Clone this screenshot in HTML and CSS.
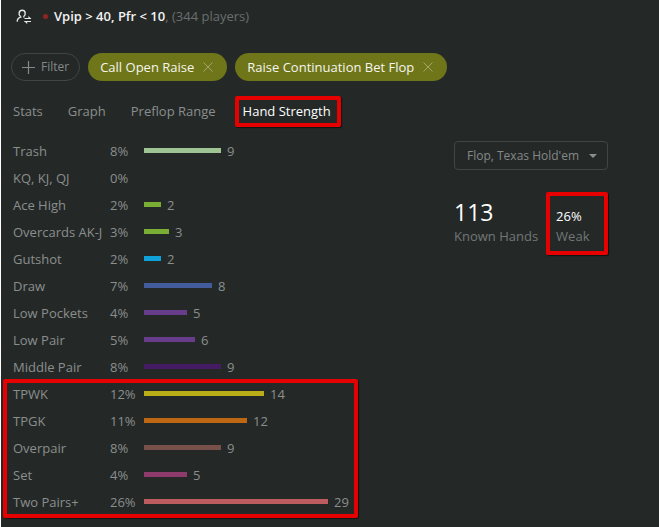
FILE: index.html
```html
<!DOCTYPE html>
<html lang="en">
<head>
<meta charset="utf-8">
<title>Hand Strength</title>
<meta name="viewport" content="width=device-width, initial-scale=1">
<link rel="stylesheet" href="styles.css">
</head>
<body>
<header class="title">
  <svg class="player-icon" width="16" height="16" viewBox="0 0 16 16" fill="none" stroke="currentColor">
    <path d="M4.5 8.3C2.2 7 2.6 2.2 6.2 2.2S10 7 7.8 8.3M4.7 8.2v1C2.6 9.8 1.3 11 1.2 13.6M7.8 8.2v1.2" stroke-width="1.4"/>
    <path d="M8.5 10.5h6.5M8.5 13.5h6.5" stroke-width="1.2"/>
    <path d="M12.4 8v3h3.1zM11.2 16v-3H8z" fill="currentColor" stroke="none"/>
  </svg>
  <span class="dot"></span>
  <h1 class="query">Vpip &gt; 40, Pfr &lt; 10</h1><span class="count">, (344 players)</span>
</header>
<div class="filters">
  <button class="pill add" type="button"><svg width="13" height="13" viewBox="0 0 13 13" stroke="currentColor" stroke-width="1.2"><path d="M6.5 0v13M0 6.5h13"/></svg>Filter</button>
  <button class="pill" type="button">Call Open Raise<svg class="close" width="10" height="10" viewBox="0 0 10 10" stroke="currentColor"><path d="M.5 .5l9 9M9.5 .5l-9 9"/></svg></button>
  <button class="pill" type="button">Raise Continuation Bet Flop<svg class="close" width="10" height="10" viewBox="0 0 10 10" stroke="currentColor"><path d="M.5 .5l9 9M9.5 .5l-9 9"/></svg></button>
</div>
<nav class="tabs">
  <a href="#stats">Stats</a>
  <a href="#graph">Graph</a>
  <a href="#range">Preflop Range</a>
  <a class="active marked" href="#strength" aria-current="page">Hand Strength</a>
</nav>
<main class="content">
  <table class="hands">
    <tbody>
      <tr><th scope="row">Trash</th><td>8%</td><td><div class="meter"><span class="bar trash" style="width:77px"></span>9</div></td></tr>
      <tr><th scope="row">KQ, KJ, QJ</th><td>0%</td><td></td></tr>
      <tr><th scope="row">Ace High</th><td>2%</td><td><div class="meter"><span class="bar high" style="width:17px"></span>2</div></td></tr>
      <tr><th scope="row">Overcards AK-J</th><td>3%</td><td><div class="meter"><span class="bar high" style="width:25px"></span>3</div></td></tr>
      <tr><th scope="row">Gutshot</th><td>2%</td><td><div class="meter"><span class="bar gutshot" style="width:17px"></span>2</div></td></tr>
      <tr><th scope="row">Draw</th><td>7%</td><td><div class="meter"><span class="bar draw" style="width:68px"></span>8</div></td></tr>
      <tr><th scope="row">Low Pockets</th><td>4%</td><td><div class="meter"><span class="bar low" style="width:43px"></span>5</div></td></tr>
      <tr><th scope="row">Low Pair</th><td>5%</td><td><div class="meter"><span class="bar low" style="width:51px"></span>6</div></td></tr>
      <tr><th scope="row">Middle Pair</th><td>8%</td><td><div class="meter"><span class="bar middle" style="width:77px"></span>9</div></td></tr>
    </tbody>
    <tbody class="marked">
      <tr><th scope="row">TPWK</th><td>12%</td><td><div class="meter"><span class="bar tpwk" style="width:120px"></span>14</div></td></tr>
      <tr><th scope="row">TPGK</th><td>11%</td><td><div class="meter"><span class="bar tpgk" style="width:103px"></span>12</div></td></tr>
      <tr><th scope="row">Overpair</th><td>8%</td><td><div class="meter"><span class="bar overpair" style="width:77px"></span>9</div></td></tr>
      <tr><th scope="row">Set</th><td>4%</td><td><div class="meter"><span class="bar set" style="width:43px"></span>5</div></td></tr>
      <tr><th scope="row">Two Pairs+</th><td>26%</td><td><div class="meter"><span class="bar two-pairs" style="width:184px"></span>29</div></td></tr>
    </tbody>
  </table>
  <section class="summary">
    <div class="picker">
      <select aria-label="Street and game">
        <option>Flop, Texas Hold'em</option>
      </select>
      <svg class="caret" width="8" height="4" viewBox="0 0 8 4" fill="currentColor"><path d="M0 0h8L4 4z"/></svg>
    </div>
    <div class="totals">
      <div class="total"><strong class="large">113</strong><span>Known Hands</span></div>
      <div class="total marked"><strong>26%</strong><span>Weak</span></div>
    </div>
  </section>
</main>
</body>
</html>
```
FILE: styles.css
```css
* { box-sizing: border-box; }

html { background: #242928; }

body {
  margin: 0;
  min-height: 100vh;
  border-left: 1px solid #fff;
  background: #242928;
  color: #8b8e8d;
  font: 13px/20px "Segoe UI", "Open Sans", "Noto Sans", sans-serif;
}

.title {
  display: flex;
  align-items: center;
  padding: 6px 15px 0;
}

.player-icon { color: #e8e8e8; }

.dot {
  width: 5px;
  height: 5px;
  margin: 0 6px 0 11px;
  border-radius: 50%;
  background: #8f2424;
}

.query {
  margin: 0;
  color: #f2f2f2;
  font-size: 13px;
  font-weight: 600;
}

.count { color: #6a6e6d; }

.filters {
  display: flex;
  flex-wrap: wrap;
  gap: 8px;
  padding: 27px 10px 0;
}

.pill {
  display: flex;
  align-items: center;
  gap: 9px;
  height: 28px;
  padding: 0 14px 0 12px;
  border: 0;
  border-radius: 14px;
  background: #6f7519;
  color: #f5f5ee;
  font: inherit;
}

.pill.add {
  gap: 6px;
  padding: 0 10px;
  border: 1px solid #414645;
  background: none;
  color: #858887;
  font-size: 12px;
}

.close { color: #a3a66c; }

.tabs {
  display: flex;
  flex-wrap: wrap;
  gap: 25px;
  padding: 20px 12px 0;
}

.tabs a {
  color: inherit;
  text-decoration: none;
}

.tabs .active {
  padding: 0 2px;
  color: #fff;
}

.content {
  display: flex;
  gap: 104px;
  padding: 16px 12px 8px;
}

.hands {
  width: 337px;
  border-collapse: collapse;
  table-layout: fixed;
}

.hands tr { height: 27px; }

.hands th,
.hands td {
  padding: 0;
  font-weight: 400;
  text-align: left;
  white-space: nowrap;
}

.hands th { width: 97px; }
.hands th + td { width: 34px; }

.meter {
  display: flex;
  align-items: center;
  gap: 6px;
}

.bar { height: 5px; }
.trash { background: #9dc492; }
.high { background: #7aad33; }
.gutshot { background: #0fa2d8; }
.draw { background: #415b9b; }
.low { background: #673c8b; }
.middle { background: #451c63; }
.tpwk { background: #b9ae17; }
.tpgk { background: #bd6713; }
.overpair { background: #775149; }
.set { background: #8e3a6b; }
.two-pairs { background: #bd5c5f; }

.summary { padding-top: 4px; }

.picker {
  position: relative;
  width: 154px;
}

.picker select {
  width: 100%;
  height: 29px;
  padding: 0 12px;
  border: 1px solid #414645;
  border-radius: 4px;
  appearance: none;
  background: none;
  color: #858887;
  font: inherit;
  font-size: 12px;
}

.caret {
  position: absolute;
  top: 13px;
  right: 11px;
  pointer-events: none;
}

.totals {
  display: flex;
  align-items: flex-end;
  gap: 18px;
  padding-top: 28px;
  color: #737776;
}

.total {
  display: flex;
  flex-direction: column;
  white-space: nowrap;
}

.total strong {
  color: #fff;
  font-weight: 400;
}

.total .large {
  font-size: 23px;
  line-height: 28px;
}

/* Red frames drawn around the highlighted parts */
.marked { position: relative; }

.marked::after {
  content: "";
  position: absolute;
  inset: -5px -8px -6px -6px;
  border: 4px solid #e60000;
  border-radius: 2px;
  box-shadow: 1px 1px 1px #111;
  pointer-events: none;
}

.hands .marked::after { inset: -1px -8px -3px -10px; }
.total.marked::after { inset: -14px -19px -9px -10px; }
```
